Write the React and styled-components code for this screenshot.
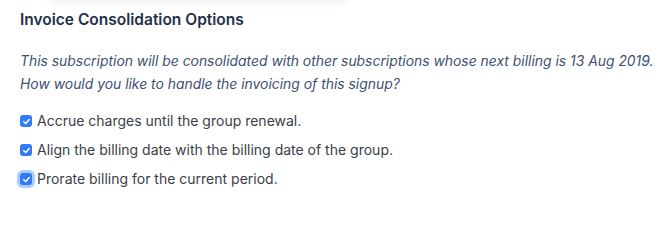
import React from 'react';
import styled, { createGlobalStyle } from 'styled-components';

const GlobalStyle = createGlobalStyle`
  html, body { margin: 0; padding: 0; background: #ffffff; }
  body { font-family: 'Inter', 'Noto Sans', sans-serif; }
`;

const options = [
  { label: 'Accrue charges until the group renewal.', focused: false },
  { label: 'Align the billing date with the billing date of the group.', focused: false },
  { label: 'Prorate billing for the current period.', focused: true },
];

export default function App() {
  return (
    <>
      <GlobalStyle />
      <Page>
        <TopShadow />
        <Section>
          <Heading>Invoice Consolidation Options</Heading>
          <Note>
            This subscription will be consolidated with other subscriptions whose next billing is 13 Aug 2019.
            <br />
            How would you like to handle the invoicing of this signup?
          </Note>
          <OptionList>
            {options.map((o) => (
              <Option key={o.label}>
                <Box focused={o.focused}>
                  <svg width="9" height="9" viewBox="0 0 10 10">
                    <path d="M2 5.2 L4.2 7.3 L8 2.8" fill="none" stroke="#fff" strokeWidth="1.7" strokeLinecap="round" strokeLinejoin="round" />
                  </svg>
                </Box>
                <Label>{o.label}</Label>
              </Option>
            ))}
          </OptionList>
        </Section>
      </Page>
    </>
  );
}

const Page = styled.div`
  position: relative;
  width: 665px;
  height: 203px;
  overflow: hidden;
  background: #ffffff;
`;

const TopShadow = styled.div`
  position: absolute;
  left: 48px;
  top: -30px;
  width: 300px;
  height: 30px;
  border-radius: 6px;
  box-shadow: 0 2px 10px rgba(30, 40, 60, 0.08);
`;

const Section = styled.div`
  padding: 10px 0 0 20px;
`;

const Heading = styled.h3`
  margin: 0;
  font-size: 15.5px;
  font-weight: 600;
  line-height: 20px;
  color: #243047;
`;

const Note = styled.p`
  margin: 20px 0 0 0;
  font-size: 13.9px;
  font-style: italic;
  line-height: 23px;
  color: #3e5072;
  white-space: nowrap;
`;

const OptionList = styled.div`
  margin-top: 15px;
  display: flex;
  flex-direction: column;
  gap: 9px;
`;

const Option = styled.label`
  display: flex;
  align-items: center;
  gap: 5px;
  height: 20px;
`;

const Box = styled.span`
  width: 12px;
  height: 12px;
  border-radius: 3px;
  background: #2f7cf6;
  display: flex;
  align-items: center;
  justify-content: center;
  box-shadow: ${(p) => (p.focused ? '0 0 1px 3px rgba(47, 124, 246, 0.4)' : 'none')};
`;

const Label = styled.span`
  font-size: 14px;
  line-height: 20px;
  color: #3a3e47;
`;
